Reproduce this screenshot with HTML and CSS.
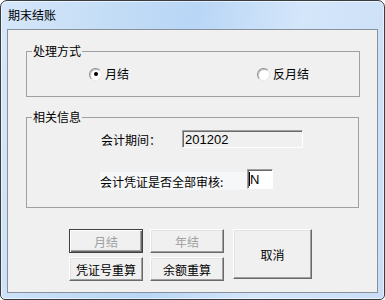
FILE: index.html
```html
<!DOCTYPE html>
<html lang="zh-CN">
<head>
    <meta charset="UTF-8">
    <title>期末结账</title>
    <link rel="stylesheet" href="styles.css">
</head>
<body>
    <div class="window">
        <div class="titlebar">期末结账</div>
        <div class="client">
            <fieldset class="group group-mode">
                <legend>处理方式</legend>
                <div class="options">
                    <label class="opt"><span class="radio checked"></span>月结</label>
                    <label class="opt"><span class="radio"></span>反月结</label>
                </div>
            </fieldset>
            <fieldset class="group group-info">
                <legend>相关信息</legend>
                <div class="row row-period">
                    <span class="lbl">会计期间：</span>
                    <span class="field field-period">201202</span>
                </div>
                <div class="row row-audit">
                    <span class="lbl">会计凭证是否全部审核:</span>
                    <span class="field field-audit"><span class="caret"></span>N</span>
                </div>
            </fieldset>
            <div class="buttons">
                <button class="btn btn-default" disabled>月结</button>
                <button class="btn" disabled>年结</button>
                <button class="btn btn-cancel">取消</button>
                <button class="btn">凭证号重算</button>
                <button class="btn">余额重算</button>
            </div>
        </div>
    </div>
</body>
</html>
```

FILE: styles.css
```css
html, body {
    margin: 0;
    padding: 0;
    background: #fff;
}
body {
    font-family: "Noto Sans CJK SC", "Liberation Sans", sans-serif;
    font-size: 12px;
    color: #000;
}
.window {
    box-sizing: border-box;
    width: 385px;
    height: 300px;
    border: 1px solid #3a3d42;
    border-radius: 7px 7px 5px 5px;
    padding: 0 6px 6px;
    background: linear-gradient(100deg, #d6e7fa 0%, #c4ddf6 25%, #b8d6f6 45%, #d4e6fa 70%, #c9def6 100%);
    box-shadow: inset 0 0 0 1px rgba(255, 255, 255, .55);
}
.titlebar {
    height: 28px;
    line-height: 28px;
    padding-left: 1px;
    font-size: 12px;
    color: #000;
}
.client {
    box-sizing: border-box;
    height: 264px;
    border: 1px solid #87909b;
    background: #f0f0f0;
    padding-top: 14px;
}

/* group boxes */
.group {
    margin: 0 0 0 18px;
    padding: 0;
    border: 1px solid #a0a0a0;
    min-width: 0;
}
.group legend {
    margin-left: 5px;
    padding: 0 1px;
    font-size: 12px;
    line-height: 14px;
}
.group-mode {
    width: 334px;
    box-sizing: border-box;
    padding-bottom: 14px;
}
.group-info {
    width: 333px;
    box-sizing: border-box;
    margin-top: 13px;
    padding-bottom: 18px;
}

.options {
    display: flex;
    margin-top: 8px;
    height: 16px;
    padding-left: 62px;
}
.opt {
    display: flex;
    align-items: center;
    flex-shrink: 0;
    line-height: 16px;
}
.opt:first-child {
    width: 168px;
}
.radio {
    box-sizing: border-box;
    display: inline-flex;
    align-items: center;
    justify-content: center;
    width: 13px;
    height: 13px;
    margin-right: 3px;
    border-radius: 50%;
    border: 1px solid;
    border-color: #8a8a8a #e8e8e8 #e8e8e8 #8a8a8a;
    background: #fff;
    box-shadow: inset 1px 1px #c8c8c8;
}
.radio.checked::after {
    content: "";
    width: 4px;
    height: 4px;
    border-radius: 50%;
    background: #000;
}

/* info rows */
.row {
    display: flex;
    align-items: center;
}
.row-period {
    margin-top: 6px;
    height: 18px;
    padding-left: 74px;
}
.row-period .lbl {
    width: 81px;
}
.row-audit {
    margin-top: 21px;
    height: 20px;
    padding-left: 73px;
}
.row-audit .lbl {
    width: 147px;
    padding-top: 5px;
    background: linear-gradient(#f0f0f0 0, #f0f0f0 4px, #f6f7f9 4px);
}
.field {
    box-sizing: border-box;
    display: flex;
    align-items: center;
    border: 1px solid;
    border-color: #a0a0a0 #fff #fff #a0a0a0;
    box-shadow: inset 1px 1px #696969;
    font-family: "Liberation Sans", Arial, sans-serif;
    font-size: 13px;
    padding-left: 2px;
}
.field-period {
    width: 121px;
    height: 18px;
    background: #f0f0f0;
}
.field-audit {
    width: 26px;
    height: 20px;
    background: #fff;
    padding-left: 1px;
}
.caret {
    display: inline-block;
    width: 1px;
    height: 14px;
    background: #000;
}

/* buttons */
.buttons {
    display: grid;
    grid-template-columns: 74px 74px 81px;
    grid-template-rows: 24px 24px;
    column-gap: 7px;
    row-gap: 4px;
    margin: 21px 0 0 61px;
}
.btn {
    box-sizing: border-box;
    margin: 0;
    padding: 0;
    font-family: "Noto Sans CJK SC", "Liberation Sans", sans-serif;
    font-size: 12px;
    color: #000;
    background: #f0f0f0;
    border: 1px solid;
    border-color: #fff #696969 #696969 #fff;
    box-shadow: inset -1px -1px #a0a0a0, inset 1px 1px #e3e3e3;
    border-radius: 0;
}
.btn:disabled {
    color: #a0a0a0;
}
.btn-default {
    border: 1px solid #404040;
    box-shadow: inset 1px 1px #fff, inset -1px -1px #696969, inset -2px -2px #a0a0a0;
}
.btn-cancel {
    grid-column: 3;
    grid-row: 1 / span 2;
    height: 50px;
    margin-left: 2px;
    align-self: start;
}
```
